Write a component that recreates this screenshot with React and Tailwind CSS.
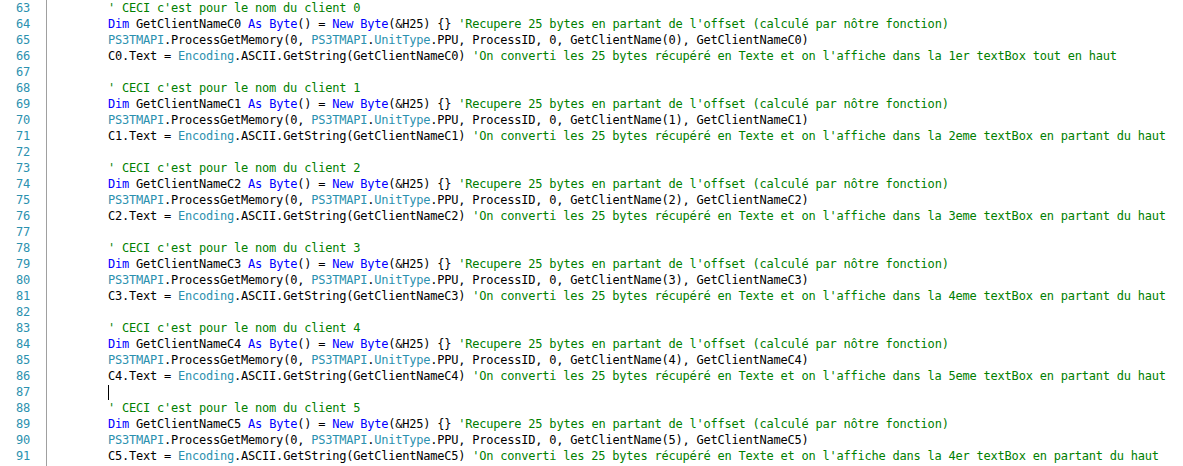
import React from "react";

const K = "k", T = "t", C = "c", N = "n";

function block(i, ordinal, tail) {
  return [
    [[C, `' CECI c'est pour le nom du client ${i}`]],
    [
      [K, "Dim"], [N, ` GetClientNameC${i} `], [K, "As"], [N, " "], [K, "Byte"], [N, "() = "], [K, "New"], [N, " "], [K, "Byte"],
      [N, "(&H25) {} "], [C, "'Recupere 25 bytes en partant de l'offset (calculé par nôtre fonction)"],
    ],
    [
      [T, "PS3TMAPI"], [N, ".ProcessGetMemory(0, "], [T, "PS3TMAPI"], [N, "."], [T, "UnitType"],
      [N, `.PPU, ProcessID, 0, GetClientName(${i}), GetClientNameC${i})`],
    ],
    [
      [N, `C${i}.Text = `], [T, "Encoding"], [N, `.ASCII.GetString(GetClientNameC${i}) `],
      [C, `'On converti les 25 bytes récupéré en Texte et on l'affiche dans la ${ordinal} textBox ${tail}`],
    ],
  ];
}

const lines = [
  ...block(0, "1er", "tout en haut"), [],
  ...block(1, "2eme", "en partant du haut"), [],
  ...block(2, "3eme", "en partant du haut"), [],
  ...block(3, "4eme", "en partant du haut"), [],
  ...block(4, "5eme", "en partant du haut"), "cursor",
  ...block(5, "4er", "en partant du haut"),
];

const cls = {
  k: "text-[#0000ff]",
  t: "text-[#2b91af]",
  c: "text-[#008000]",
  n: "text-black",
};

export default function App() {
  return (
    <div
      className="w-[1183px] h-[466px] bg-white overflow-hidden flex text-[12px] leading-[16px] tracking-[-0.22px] whitespace-pre"
      style={{ fontFamily: '"DejaVu Sans Mono", "Liberation Mono", monospace' }}
    >
      <div className="w-[47px] shrink-0 border-r border-[#a0a0a0] text-right pr-[16px] text-[#2b91af] flex flex-col">
        {lines.map((_, i) => (
          <div key={i} className="h-[16px]">{63 + i}</div>
        ))}
      </div>
      <div className="flex flex-col pl-[61px]">
        {lines.map((segs, i) => (
          <div key={i} className="h-[16px] flex items-center">
            {segs === "cursor" ? (
              <span className="inline-block w-[1px] h-[15px] bg-black" />
            ) : (
              segs.map(([c, s], j) => (
                <span key={j} className={cls[c]}>{s}</span>
              ))
            )}
          </div>
        ))}
      </div>
    </div>
  );
}
